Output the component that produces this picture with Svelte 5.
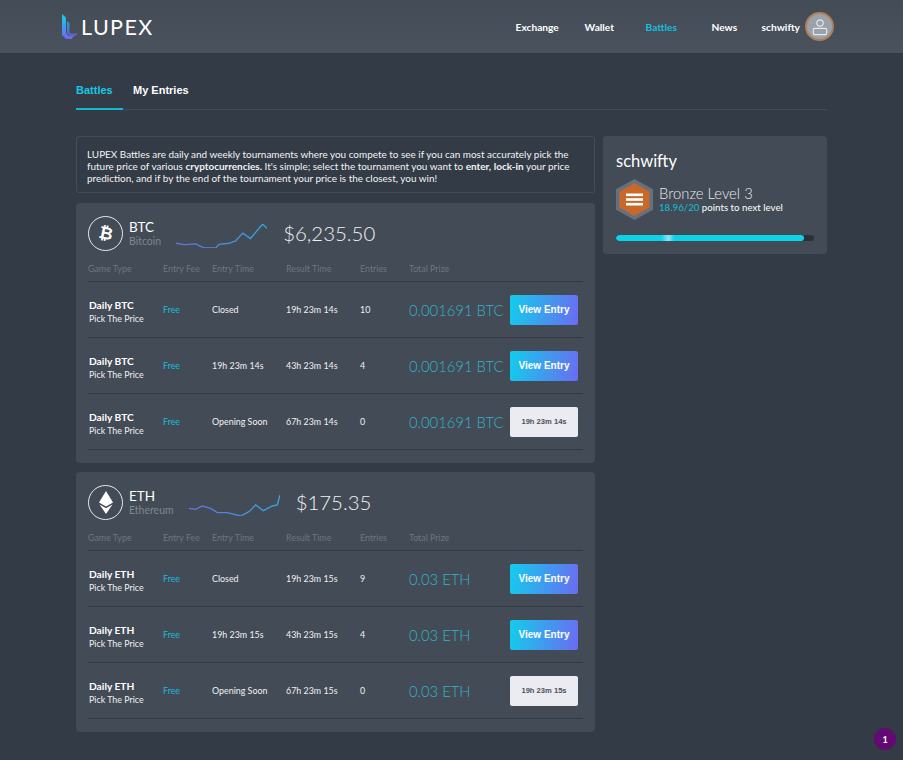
<script>
  const cards = [
    {
      sym: 'BTC', name: 'Bitcoin', price: '$6,235.50', prize: '0.001691 BTC', timer: '14s',
      line: 'M0 57 L25 61 L60 59 L85 71 L120 71 L130 60 L160 57 L180 50 L202 27 L225 43 L262 0 L275 13',
      viewBox: '0 0 275 71', chartWidth: 91, chartHeight: 24, entries: [10, 4, 0]
    },
    {
      sym: 'ETH', name: 'Ethereum', price: '$175.35', prize: '0.03 ETH', timer: '15s',
      line: 'M0 40 L20 43 L40 33 L65 40 L85 53 L115 53 L155 63 L180 50 L200 30 L223 47 L250 33 L265 30 L273 0',
      viewBox: '0 0 273 63', chartWidth: 91, chartHeight: 21, entries: [9, 4, 0]
    }
  ];
  const navLinks = ['Exchange', 'Wallet', 'Battles', 'News'];
  const hourOffsets = ['19h 23m', '43h 23m', '67h 23m'];
</script>

<div class="page">
  <header class="topbar">
    <div class="logo">
      <svg width="16" height="25" viewBox="0 0 16 25" aria-hidden="true">
        <defs>
          <linearGradient id="logoGrad" x1="0" y1="0" x2="0" y2="1">
            <stop offset="0" stop-color="#12d0e8" />
            <stop offset="1" stop-color="#6f66f2" />
          </linearGradient>
        </defs>
        <path d="M0 0 L4 3.5 V19 L6.5 22 H12 L9.5 25 H4 L0 21 Z" fill="url(#logoGrad)" />
        <path d="M5 7 L7.5 9.5 V19.5 H16 L13 22 H7.5 L5 19 Z" fill="url(#logoGrad)" opacity="0.7" />
      </svg>
      <span>LUPEX</span>
    </div>
    <nav class="nav">
      {#each navLinks as link}
        <span class="nav-link" class:on={link === 'Battles'}>{link}</span>
      {/each}
      <span class="user">schwifty</span>
      <span class="avatar">
        <svg width="16" height="18" viewBox="0 0 18 20" fill="none" stroke="#e6e8ea" stroke-width="1.3" aria-hidden="true">
          <circle cx="9" cy="5.5" r="3.6" />
          <path d="M3 11.5 H15 Q16.5 11.5 16.5 13 V17 Q16.5 18.5 15 18.5 H3 Q1.5 18.5 1.5 17 V13 Q1.5 11.5 3 11.5 Z" />
        </svg>
      </span>
    </nav>
  </header>

  <main class="main">
    <div class="tabs">
      <span class="tab on">Battles</span>
      <span class="tab">My Entries</span>
    </div>

    <div class="columns">
      <div class="left">
        <p class="intro">
          LUPEX Battles are daily and weekly tournaments where you compete to see if you can most accurately pick the<br />
          future price of various <b>cryptocurrencies.</b> It's simple; select the tournament you want to <b>enter,</b>
          <b>lock-in</b> your price<br />
          prediction, and if by the end of the tournament your price is the closest, you win!
        </p>

        {#each cards as card}
          <section class="card">
            <div class="coin">
              <span class="coin-icon">
                {#if card.sym === 'BTC'}
                  <span class="btc">₿</span>
                {:else}
                  <svg width="14" height="23" viewBox="0 0 14 23" aria-hidden="true">
                    <path d="M7 0 L14 11.5 L7 15.5 L0 11.5 Z" fill="#fff" />
                    <path d="M0.5 13.4 L7 17.2 L13.5 13.4 L7 23 Z" fill="#fff" />
                  </svg>
                {/if}
              </span>
              <div class="coin-name">
                <div class="sym">{card.sym}</div>
                <div class="full">{card.name}</div>
              </div>
              <svg class="chart" width={card.chartWidth} height={card.chartHeight} viewBox={card.viewBox} preserveAspectRatio="none" aria-hidden="true">
                <defs>
                  <linearGradient id="spark{card.sym}" x1="0" y1="0" x2="1" y2="0">
                    <stop offset="0" stop-color="#6a6fe0" />
                    <stop offset="1" stop-color="#2fa8dc" />
                  </linearGradient>
                </defs>
                <path d={card.line} fill="none" stroke="url(#spark{card.sym})" stroke-width="4" />
              </svg>
              <div class="price">{card.price}</div>
            </div>

            <div class="row head">
              <span>Game Type</span>
              <span>Entry Fee</span>
              <span>Entry Time</span>
              <span>Result Time</span>
              <span>Entries</span>
              <span>Total Prize</span>
              <span></span>
            </div>

            {#each card.entries as count, i}
              <div class="row">
                <div class="game">
                  <b>Daily {card.sym}</b>
                  <span>Pick The Price</span>
                </div>
                <span class="free">Free</span>
                <span>{i === 0 ? 'Closed' : i === 1 ? `19h 23m ${card.timer}` : 'Opening Soon'}</span>
                <span>{hourOffsets[i]} {card.timer}</span>
                <span>{count}</span>
                <span class="prize">{card.prize}</span>
                {#if i < 2}
                  <button class="btn">View Entry</button>
                {:else}
                  <button class="btn wait">19h 23m {card.timer}</button>
                {/if}
              </div>
            {/each}
          </section>
        {/each}
      </div>

      <aside class="profile">
        <h2>schwifty</h2>
        <div class="level">
          <svg width="37" height="41" viewBox="0 0 37 41" aria-hidden="true">
            <path d="M18.5 0 L37 10.2 V30.8 L18.5 41 L0 30.8 V10.2 Z" fill="#66717d" />
            <path d="M18.5 4 L33.5 12.5 V28.5 L18.5 37 L3.5 28.5 V12.5 Z" fill="#c8682a" />
            <rect x="10" y="14.5" width="17" height="2.6" fill="#fff" />
            <rect x="10" y="19.2" width="17" height="2.6" fill="#fff" />
            <rect x="10" y="23.9" width="17" height="2.6" fill="#fff" />
          </svg>
          <div>
            <div class="rank">Bronze Level 3</div>
            <div class="points"><span>18.96/20</span> points to next level</div>
          </div>
        </div>
        <div class="bar">
          <div class="fill" style="width: 95%"></div>
        </div>
      </aside>
    </div>
  </main>

  <span class="badge">1</span>
</div>

<style>
  :global(body) {
    background: #323b46;
  }
  .page {
    position: relative;
    height: 760px;
    overflow: hidden;
    background: #323b46;
    color: #fff;
    font-family: Lato, "Open Sans", sans-serif;
  }
  .topbar {
    height: 53px;
    box-sizing: border-box;
    display: flex;
    align-items: center;
    justify-content: space-between;
    padding: 0 69px 0 62px;
    background: linear-gradient(#434b56, #4a525d);
  }
  .logo {
    display: flex;
    align-items: center;
    gap: 3px;
    font-size: 21.5px;
    letter-spacing: 1.4px;
    color: #fff;
  }
  .nav {
    display: flex;
    align-items: center;
    font-size: 10.2px;
    font-weight: 700;
  }
  .nav-link:nth-child(1) { width: 69px; }
  .nav-link:nth-child(2) { width: 61px; }
  .nav-link:nth-child(3) { width: 66px; }
  .nav-link:nth-child(4) { width: 50px; }
  .nav-link.on {
    color: #17bfe0;
  }
  .user {
    margin-right: 5px;
  }
  .avatar {
    width: 25px;
    height: 25px;
    border-radius: 50%;
    border: 2px solid #b08058;
    background: #9aa3ab;
    display: flex;
    align-items: center;
    justify-content: center;
  }
  .main {
    padding: 0 76px;
  }
  .tabs {
    display: flex;
    gap: 10px;
    height: 57px;
    box-sizing: border-box;
    margin-bottom: 26px;
    border-bottom: 1px solid #434b56;
    font-family: "Liberation Sans", Arial, sans-serif;
    font-size: 11px;
    font-weight: 700;
  }
  .tab {
    padding: 31px 0 0;
    height: 25px;
  }
  .tab.on {
    width: 47px;
    color: #17c8e6;
    border-bottom: 2px solid #17b5cf;
    height: 24px;
  }
  .columns {
    display: flex;
    align-items: flex-start;
    gap: 8px;
  }
  .left {
    width: 519px;
  }
  .intro {
    margin: 0 0 10px;
    box-sizing: border-box;
    height: 57px;
    padding: 11px 10px;
    border: 1px solid #454d58;
    border-radius: 3px;
    font-size: 9.95px;
    line-height: 12px;
    color: #f2f3f5;
    white-space: nowrap;
  }
  .card {
    box-sizing: border-box;
    height: 260px;
    margin-bottom: 9px;
    padding: 12px 12px 0;
    background: #434b56;
    border-radius: 4px;
  }
  .coin {
    display: flex;
    align-items: center;
    height: 36px;
    margin-bottom: 12px;
  }
  .coin-icon {
    width: 33px;
    height: 33px;
    border: 1px solid #e8eaec;
    border-radius: 50%;
    display: flex;
    align-items: center;
    justify-content: center;
    flex: none;
    margin-right: 6px;
  }
  .btc {
    font-family: "DejaVu Sans", sans-serif;
    font-weight: 700;
    font-size: 17px;
    transform: rotate(12deg);
  }
  .sym {
    font-size: 13.5px;
    line-height: 15px;
  }
  .full {
    font-size: 10.5px;
    line-height: 12px;
    color: #7f8791;
  }
  .chart {
    margin: 6px 16px 0 15px;
    flex: none;
  }
  .price {
    font-size: 20.4px;
    font-weight: 300;
    color: #f0f1f3;
  }
  .row {
    display: grid;
    box-sizing: border-box;
    grid-template-columns: 75px 49px 74px 74px 49px 101px 68px;
    align-items: center;
    height: 56px;
    border-bottom: 1px solid #333a44;
    font-size: 8.9px;
    color: #f0f1f3;
  }
  .row.head {
    height: 19px;
    align-items: start;
    color: #6e7681;
    font-weight: 400;
    border-bottom-color: #333a44;
  }
  .game {
    display: flex;
    flex-direction: column;
    gap: 2px;
    line-height: 12px;
    padding: 4px 0 0 1px;
  }
  .game b {
    font-size: 10.2px;
    color: #fff;
  }
  .free {
    color: #17bcd8;
  }
  .prize {
    font-size: 14.8px;
    font-weight: 300;
    color: #33b3c8;
    white-space: nowrap;
  }
  .btn {
    width: 68px;
    height: 30px;
    padding: 0;
    border: none;
    border-radius: 2px;
    background: linear-gradient(100deg, #12cdec, #6a6cf2);
    color: #fff;
    font-family: "Liberation Sans", Arial, sans-serif;
    font-size: 10px;
    font-weight: 700;
  }
  .btn.wait {
    background: #ebebf2;
    color: #4b525c;
    font-size: 7.6px;
  }
  .profile {
    box-sizing: border-box;
    width: 224px;
    height: 118px;
    padding: 14px 13px 0;
    background: #434b56;
    border-radius: 4px;
  }
  .profile h2 {
    margin: 0 0 7px;
    font-size: 16.5px;
    line-height: 22px;
    font-weight: 400;
  }
  .level {
    display: flex;
    align-items: center;
    gap: 6px;
  }
  .rank {
    font-size: 14.8px;
    line-height: 15px;
    font-weight: 300;
    color: #e6e8ea;
  }
  .points {
    font-size: 9.7px;
    line-height: 13px;
  }
  .points span {
    color: #17bcd8;
  }
  .bar {
    width: 198px;
    height: 6px;
    margin-top: 15px;
    border-radius: 3px;
    background: #2a313a;
    overflow: hidden;
  }
  .fill {
    height: 100%;
    border-radius: 3px;
    background: linear-gradient(90deg, #0cd2ea 0 24%, #8ee6f2 28%, #0cd2ea 31%);
  }
  .badge {
    position: absolute;
    right: 7px;
    bottom: 10px;
    width: 22px;
    height: 22px;
    border-radius: 50%;
    background: #620a72;
    color: #fff;
    font-size: 9px;
    font-weight: 700;
    display: flex;
    align-items: center;
    justify-content: center;
  }
</style>
